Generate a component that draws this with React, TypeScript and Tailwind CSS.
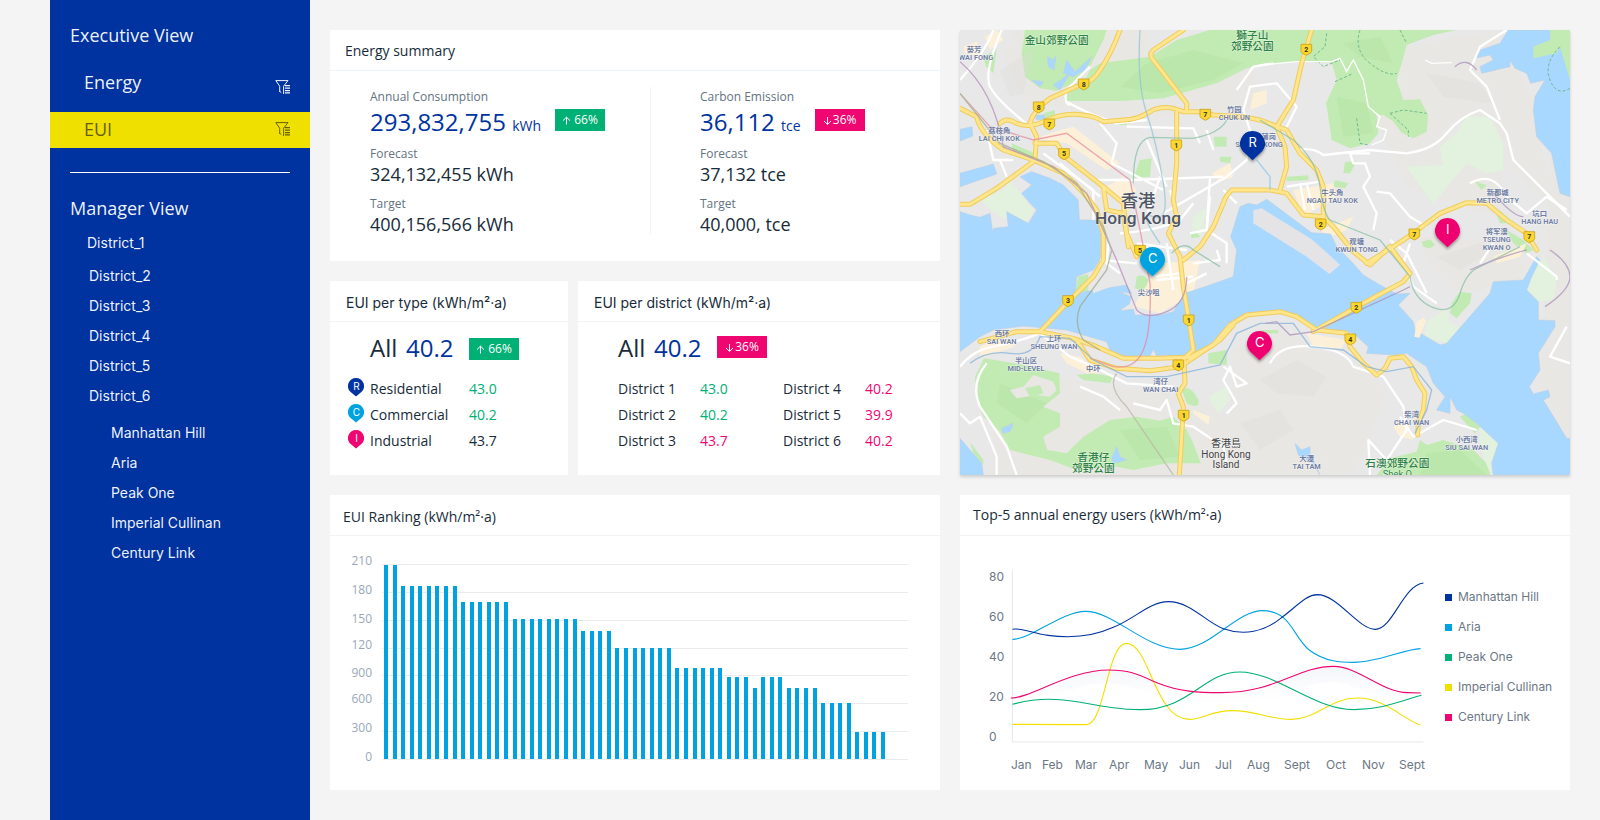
import type { ReactNode } from 'react';

const SANS = "font-['Open_Sans','Noto_Sans',sans-serif]";
const ALT = "font-['Inter','Noto_Sans_CJK_TC',sans-serif]";

const NAVY = '#0033a0';
const CYAN = '#00a3e0';
const GREEN = '#00b074';
const PINK = '#ef0670';
const YELLOW = '#f2df00';

function FilterIcon({ className = '' }: { className?: string }) {
  return (
    <svg className={className} width="15" height="14" viewBox="0 0 15 14" fill="none" stroke="currentColor" aria-hidden="true">
      <path d="M4.7 12V6.2L.8.6H13L8.6 6.2V14M4.7 11.4l1.6 1.2" />
      <path d="M10 5.6h5M10 8.1h5M10 10.6h5M10 12.8h5" strokeWidth="1.2" />
    </svg>
  );
}

function Badge({ down = false, className = '', children }: { down?: boolean; className?: string; children: ReactNode }) {
  return (
    <span
      className={`flex h-[22px] w-[50px] items-center justify-center text-xs text-white ${
        down ? 'gap-px bg-[#ef0670]' : 'gap-[3px] bg-[#00b074]'
      } ${className}`}
    >
      <svg width="9" height="9" viewBox="0 0 9 9" fill="none" stroke="currentColor" aria-hidden="true">
        {down ? <path d="M4.5 1v7.4M1 5l3.5 3.4L8 5" /> : <path d="M4.5 8.5V1.2M1 4.600L4.500 1.200l3.500 3.400" />}
      </svg>
      {children}
    </span>
  );
}

function Card({ title, titleClass, lineClass = 'border-[#f1f4f6]', children }: { title: string; titleClass: string; lineClass?: string; children: ReactNode }) {
  return (
    <section className="bg-white">
      <h2 className={`flex h-[41px] items-center border-b text-sm ${lineClass} ${titleClass}`}>{title}</h2>
      {children}
    </section>
  );
}

function Sidebar() {
  const row = 'flex h-9 items-center justify-between pr-5 pl-[34px] text-lg';
  return (
    <nav className="w-[260px] shrink-0 bg-[#0033a0] pt-5 text-white/95">
      <h2 className="flex h-[30px] items-center px-5 text-lg">Executive View</h2>
      <a href="#energy" className={`mt-3.5 ${row}`}>
        Energy
        <FilterIcon className="mb-1.5 self-end" />
      </a>
      <a href="#eui" className={`mt-3 bg-[#f0e000] pb-0.5 text-[#655f0a] ${row}`}>
        EUI
        <FilterIcon />
      </a>
      <hr className="mx-5 mt-6 border-white" />
      <h2 className="mt-5 flex h-[30px] items-center px-5 text-lg">Manager View</h2>
      <div className={`text-sm ${ALT}`}>
        <a href="#d1" className="mt-[5px] mb-[3px] flex h-[30px] items-center pl-[37px]">District_1</a>
        <ul>
          {[2, 3, 4, 5, 6].map((n) => (
            <li key={n}>
              <a href={`#d${n}`} className="flex h-[30px] items-center pl-[39px]">District_{n}</a>
            </li>
          ))}
        </ul>
        <ul className="mt-[7px]">
          {['Manhattan Hill', 'Aria', 'Peak One', 'Imperial Cullinan', 'Century Link'].map((n) => (
            <li key={n}>
              <a href="#site" className="flex h-[30px] items-center pl-[61px]">{n}</a>
            </li>
          ))}
        </ul>
      </div>
    </nav>
  );
}

type MetricProps = { label: string; value: string; unit: string; forecast: string; target: string; down?: boolean; change: string };

function Metric({ label, value, unit, forecast, target, down, change }: MetricProps) {
  const cap = 'text-xs leading-5 text-[#637381]';
  const val = 'text-lg leading-5';
  return (
    <dl>
      <dt className={cap}>{label}</dt>
      <dd className="flex h-8">
        <span className="text-2xl leading-[30px] text-[#0033a0]">
          {value} <span className="text-sm">{unit}</span>
        </span>
        <Badge down={down} className="mt-0.5 ml-3.5">{change}</Badge>
      </dd>
      <dt className={`mt-[5px] ${cap}`}>Forecast</dt>
      <dd className={val}>{forecast}</dd>
      <dt className={`mt-2.5 ${cap}`}>Target</dt>
      <dd className={val}>{target}</dd>
    </dl>
  );
}

function SmallPin({ color, letter }: { color: string; letter: string }) {
  return (
    <svg width="16" height="19" viewBox="0 0 16 19" className="block" aria-hidden="true">
      <path d="M8 0a8 8 0 0 1 5.900 13.400L8 18.600 2.100 13.400A8 8 0 0 1 8 0z" fill={color} />
      <text x="8.500" y="11.500" textAnchor="middle" fontSize="10" fill="#fff" fontFamily="Inter">{letter}</text>
    </svg>
  );
}

const BARS = (
  [[29, 2], [50, 7], [66, 6], [83, 8], [95, 4], [112, 7], [132, 6], [141, 3], [152, 1], [141, 3], [152, 4], [167, 4], [196, 4]] as [number, number][]
).flatMap(([top, count]) => Array.from({ length: count }, () => top));

const BAR_TICKS: [string, number][] = [['210', 29], ['180', 58], ['150', 87], ['120', 113], ['900', 141], ['600', 167], ['300', 196], ['0', 225]];

function BarChart() {
  return (
    <svg viewBox="0 0 610 254" className="block w-full" role="img" aria-label="EUI Ranking">
      {BAR_TICKS.map(([t], i) => (
        <path key={t} d={`M52 ${28.5 + Math.round(i * 27.86)}H578`} stroke="#e9ebef" />
      ))}
      {BARS.map((top, i) => (
        <rect key={i} x={Math.round(54 + i * 8.57)} y={top} width="4" height={223 - top} fill={CYAN} />
      ))}
      {BAR_TICKS.map(([t, y]) => (
        <text key={t} x="42" y={y} textAnchor="end" fontSize="12" fill="#99a8b8">{t}</text>
      ))}
    </svg>
  );
}

const LINES: [string, string][] = [
  [YELLOW, 'M153 703L335 704C380 700 385 460 432 460C490 460 500 688 586 688C620 688 640 662 692 662C750 662 780 688 836 688C900 688 930 624 997 624C1070 624 1110 690 1153 705'],
  [GREEN, 'M153 643C220 620 270 627 320 637C380 650 420 659 465 659C590 659 620 546 710 546C800 546 890 659 990 659C1060 659 1110 630 1155 616'],
  [PINK, 'M149 624C200 624 290 540 390 540C440 540 460 553 510 580C560 605 610 608 665 608C800 608 850 529 940 529C1000 529 1060 608 1120 608L1153 609'],
  [CYAN, 'M153 448C200 448 270 365 333 364C400 364 480 478 562 478C640 478 700 362 766 362C835 362 840 440 880 480C920 517 960 517 990 517C1050 517 1110 478 1153 476'],
  [NAVY, 'M153 418C175 412 200 430 240 436C300 446 350 440 400 412C450 388 490 335 535 335C590 335 630 400 670 416C720 438 770 425 810 385C850 350 870 315 900 314C950 314 1000 418 1042 418C1085 418 1110 285 1160 279'],
];

const MONTHS: [string, number][] = [
  ['Jan', 51], ['Feb', 82], ['Mar', 115], ['Apr', 149], ['May', 184], ['Jun', 219], ['Jul', 255], ['Aug', 287], ['Sept', 324], ['Oct', 366], ['Nov', 402], ['Sept', 439],
];

function LineChart() {
  return (
    <svg viewBox="0 0 475 254" className={`block min-w-0 flex-1 ${ALT}`} role="img" aria-label="Top-5 annual energy users">
      <defs>
        <linearGradient id="haze" x1="0" y1="0" x2="0" y2="1">
          <stop offset="0" stopColor="#eef0f6" stopOpacity=".7" />
          <stop offset="1" stopColor="#fff" stopOpacity="0" />
        </linearGradient>
      </defs>
      <g transform="translate(-10 -46) scale(.40816 .33333)" fill="none">
        <path d="M149 624C200 624 290 540 390 540C440 540 460 553 510 580C560 605 610 608 665 608C800 608 850 529 940 529C1000 529 1060 608 1120 608V650C1060 650 1000 580 940 575C850 575 800 650 665 650C560 650 480 590 390 580C290 580 200 660 149 665z" fill="url(#haze)" />
        <path d="M153 240V756H1160" stroke="#e6e8ec" vectorEffect="non-scaling-stroke" />
        {LINES.map(([c, d]) => (
          <path key={c} d={d} stroke={c} strokeWidth="1.1" vectorEffect="non-scaling-stroke" />
        ))}
      </g>
      <g fontSize="12" fill="#6b7785">
        {['80', '60', '40', '20', '0'].map((t, i) => (
          <text key={t} x="29" y={45 + i * 40}>{t}</text>
        ))}
        {MONTHS.map(([m, x]) => (
          <text key={x} x={x} y="233">{m}</text>
        ))}
      </g>
    </svg>
  );
}

/* ---- Map: drawn in an 1830 x 1335 space, three units per pixel ---- */

const TERRAIN = [
  'M170 0L560 0 600 120 300 230 200 220 130 80z',
  'M300 215L600 215 880 110 900 200 850 240 700 250 560 270 350 250z',
  'M1325 50L1620 0 1680 130 1740 250 1750 400 1830 560 1600 380 1500 260 1400 340 1320 300z',
  'M1240 250L1500 330 1640 270 1620 560 1350 480z',
  'M1380 620L1720 640 1680 750 1500 790 1400 700z',
  'M820 960L960 900 1200 1010 1280 1080 1240 1200 1180 1330 800 1330z',
  'M100 1010L400 1060 700 1100 880 1200 860 1335 100 1335z',
  'M1790 0L1830 0 1830 1240 1740 1080z',
];

const PARKS = [
  'M195 0L185 70 195 140 240 175 290 182 340 160 390 110 430 30 440 0z',
  'M370 160L390 120 420 100 570 80 650 30 750 0 1490 0 1420 15 1340 45 1325 100 1310 150 1330 210 1380 208 1404 255 1400 305 1360 325 1325 308 1300 275 1270 255 1250 255 1255 310 1230 340 1170 355 1115 330 1105 260 1098 220 1130 150 1115 98 1010 95 900 105 860 115 770 160 610 205 490 213 312 213 315 195z',
  'M70 80L110 60 100 130 78 110z',
  'M250 250L285 240 285 275 255 275z',
  'M155 340L225 370 225 385 160 370z',
  'M480 272L505 272 500 285 475 285z',
  'M760 320L800 320 800 350 765 350zM780 380L815 380 810 400 780 395z',
  'M540 390L575 385 570 440 520 445z',
  'M690 610L715 600 720 620 695 625z',
  'M355 740L385 732 385 790 345 780z',
  'M530 740Q550 730 565 750L555 785 525 775z',
  'M72 985L180 1002 298 1030 300 1090 250 1130 300 1150 300 1190 250 1220 262 1260 320 1270 370 1220 450 1170 530 1160 600 1172 640 1160 680 1200 700 1240 722 1300 620 1300 520 1320 470 1310 350 1320 270 1290 150 1260 120 1205 70 1160 50 1110 45 1040z',
  'M350 1035L400 1030 460 1040 450 1060 370 1050z',
  'M745 970L800 960 800 1005 745 1000z',
  'M665 1080Q690 1060 715 1110 720 1140 680 1120z',
  'M1155 395L1190 395 1170 430 1150 430z',
  'M1125 450L1165 460 1155 475 1120 470z',
  'M980 440L1045 436 1045 450 980 454z',
  'M1385 635L1410 628 1425 645 1410 655 1390 650z',
  'M1475 820L1500 785 1535 790 1530 820 1490 865 1470 850z',
  'M1600 530L1630 550 1640 580 1620 580zM1640 600L1690 630 1720 660 1700 670 1660 640z',
  'M1540 450L1560 460 1580 465 1565 480z',
  'M1250 1335L1290 1285 1370 1265 1380 1230 1400 1245 1450 1230 1540 1260 1590 1310 1590 1335z',
  'M1500 1160L1520 1150 1560 1190 1545 1210z',
  'M30 1235L70 1290 70 1305 40 1270z',
  'M905 900h50v10h-50z',
];

const PALE = [
  'M1520 260L1590 260 1630 340 1630 420 1580 430 1520 400 1470 460 1420 525 1340 410 1450 405 1440 350 1490 310z',
  'M60 510L130 480 150 450 220 540 200 580 120 560z',
  'M1400 875L1460 835 1470 880 1500 890 1460 940 1395 920z',
  'M1705 740L1750 680 1790 750 1780 810 1720 815 1700 780z',
  'M730 540L740 535 725 620 695 600 700 560z',
  'M1560 1190L1615 1240 1590 1330 1560 1250z',
  'M745 1100L800 1070 810 1110 775 1150z',
];

const SAND = [
  'M300 300L340 290 480 400 440 420 320 340 230 325z',
  'M440 470L490 440 530 480 500 550z',
  'M75 20L110 0 130 30 90 60zM10 50L50 35 70 80 15 70z',
  'M520 830L600 700 720 690 700 790 600 850 530 830z',
  'M1000 480L1120 460 1130 500 1030 560z',
  'M1080 600L1180 560 1160 600 1110 620z',
  'M1040 910L1160 930 1140 960 1060 950z',
  'M1600 680L1700 640 1680 680 1610 700z',
  'M300 970L360 980 420 1030 380 1030 320 1000z',
  'M880 190L920 180 920 220 870 240z',
  'M755 430L810 400 820 440 780 455z',
  'M60 950L100 930 180 930 160 950 60 985z',
  'M1300 1190L1340 1170 1360 1230 1320 1220z',
  'M700 1140L750 1160 745 1185 700 1150z',
];

const WATER = [
  'M0 298L36 290 38 318 0 333z',
  'M0 430L100 402 110 432 0 470z',
  'M0 545L30 555 60 562 90 550 98 605 102 595 145 590 140 545 205 580 230 540 210 520 185 490 215 465 180 440 215 425 270 445 310 465 355 510 358 570 410 570 425 620 420 690 400 720 350 740 345 790 500 765 515 790 478 785 513 800 508 822 478 842 520 838 525 855 600 855 640 845 675 790 735 770 820 740 830 660 812 620 840 530 865 520 890 525 920 508 1055 608 1112 612 1130 650 1170 690 1210 735 1260 765 1310 792 1350 790 1315 825 1360 875 1365 900 1440 945 1460 940 1590 790 1600 755 1690 750 1730 680 1740 690 1715 740 1700 780 1735 815 1735 870 1785 872 1785 890 1735 970 1740 1020 1708 1070 1720 1092 1765 1080 1770 1100 1750 1110 1820 1225 1830 1225 1830 1335 1600 1335 1595 1300 1615 1240 1550 1180 1510 1150 1490 1140 1470 1100 1470 1150 1430 1140 1455 1100 1420 1060 1400 1010 1340 970 1300 975 1220 970 1225 950 1180 910 1150 900 1080 900 1030 870 960 840 930 845 820 870 770 935 690 975 590 978 580 958 570 978 490 978 450 960 440 935 370 915 320 900 190 888 100 900 60 920 0 965z',
  'M1645 0L1620 40 1560 60 1545 85 1590 75 1600 90 1560 110 1565 130 1650 110 1650 90 1665 115 1700 130 1712 160 1755 150 1725 200 1720 240 1730 320 1775 370 1800 490 1830 500 1830 0z',
  'M0 1225L30 1260 65 1300 70 1335 0 1335z',
  'M262 80L280 90 288 75 282 120 265 110zM320 90L345 125 395 80 375 120 340 140 310 130zM280 165L330 130 300 180zM215 150L250 155 240 170z',
  'M228 255h25v14h-25z',
  'M125 1195L160 1180 150 1205 130 1210zM455 1285L470 1250 480 1280 500 1290 460 1300z',
  'M1005 1240L1025 1260 1050 1250 1050 1275 1065 1300 1080 1335 1060 1300 1015 1275z',
];

const LAND: [string, string][] = [
  ['M880 540L905 535 1055 628 1125 690 1140 705 1108 732 1040 680 880 580z', '#e4e4e6'],
  ['M1770 0L1770 30 1720 50 1720 85 1790 70 1800 50 1830 150 1830 0z', '#c2ebb3'],
  ['M1370 875l20-12 8 10-20 50-15-3z', '#fdf0d8'],
  ['M150 1080L190 1070 220 1035 280 1055 290 1080 270 1100 230 1095 170 1105z', '#e9e7e3'],
  ['M195 1075L240 1065 250 1090 210 1100z', '#c2ebb3'],
  ['M385 740L480 720 530 740 400 790z', '#e8e8e8'],
];

const WHITE = [
  'M100 0Q80 60 0 150M125 0Q70 130 90 170T210 290M80 300L100 390 160 390M120 390L140 440',
  'M250 370L400 480 400 570M300 400L420 500M500 290L700 295 720 340M560 330L620 470M420 280L470 340 455 400 610 480',
  'M400 450H520L790 440M610 550L800 440 860 390 870 300 850 240 870 170 950 160 1010 230 980 290',
  'M330 225Q310 220 320 180L390 110M320 215Q380 250 470 280L560 270',
  'M480 610Q600 600 660 570L700 520M630 480L650 550M530 640L680 660M690 610L740 600 750 500',
  'M750 440L740 600 800 640 800 700M760 360L740 300M600 440L560 560M830 180L880 110 940 100',
  'M1010 360Q1060 350 1090 375L1230 360 1340 370Q1420 360 1460 310T1560 240L1620 280 1640 310 1660 390 1740 470 1830 560',
  'M1230 370L1170 370 1180 400 1215 400 1230 440 1210 470 1250 550 1240 600M1250 485L1290 490 1350 560 1400 590',
  'M1640 0L1560 50 1530 120 1580 170 1620 270M1530 460Q1600 420 1640 500L1700 550 1760 500 1820 540',
  'M1700 670L1790 740 1790 750M1560 700L1600 640M1820 890L1770 980 1830 1000M1350 640L1330 700 1360 770 1430 820',
  'M0 1010Q40 960 100 950T240 910L330 980 400 1010 500 1060 640 1070M80 1000Q30 1060 60 1130L140 1250 170 1335',
  'M0 1150L30 1180 60 1160 110 1280 110 1335M360 1070L430 1100 480 1140M520 1120L600 1140 620 1110 640 1180 700 1190 790 1250 800 1300',
  'M790 1010L860 1060 830 1070 810 1010 790 1050 830 1120 800 1150',
  'M930 1000Q960 940 1060 950T1180 1010L1270 1040 1330 1130 1340 1200 1280 1290 1225 1230 1230 1335M1320 1160L1360 1220 1450 1170 1550 1200',
  'M1290 630L1340 670 1400 790M420 690L530 700M620 640L640 780M560 640L580 740 660 730M1040 460L1060 540M1020 460L1035 540M980 470L1080 455',
  'M700 700L780 690 770 660M680 760L740 730M590 750L700 740M445 640L440 700 480 730M790 480L830 520',
];

const YELLOW_ROADS = [
  'M480 0Q455 70 420 120 400 155 360 165L270 205Q220 240 210 280',
  'M670 0L580 60Q565 75 580 90L680 220V245',
  'M120 280Q140 260 170 280 210 295 250 275 310 245 370 255 410 260 430 275L490 270Q530 270 570 245 610 220 670 245L720 245 760 255 850 260 900 270 980 300 1020 370 1070 420 1090 470V570',
  'M650 245V400L640 510 650 560 625 610 660 680 670 770 685 860 700 960 672 985 675 1060 655 1090 670 1130 665 1220 658 1335',
  'M0 235L50 260Q60 310 130 360L220 390 310 430Q370 480 410 540L430 610V690L400 740 320 820 240 905',
  'M0 523H30L110 475 220 395M210 280L230 320 225 385M225 340H290L315 380 430 470 440 540 490 550 505 650M430 470L490 520 500 610 530 680',
  'M930 480H815Q795 500 790 520L760 590 720 650 670 690M930 480L980 490 1030 555 1090 560 1120 590 1180 665 1230 705 1290 650 1350 730 1330 755 1200 825 1060 905',
  'M1055 0L1025 100 1000 210 950 290 975 350 980 410 960 480',
  'M1220 700L1300 650 1360 610 1440 550 1520 518 1580 520 1640 570 1700 610 1730 660',
  'M60 935L170 905 240 905 340 925 410 950 490 985H590L690 982 760 945 810 885 860 855 960 845 1010 860 1070 900 1160 910 1170 950 1210 1000 1250 1035 1275 1015 1290 985 1330 980 1355 1010 1370 1050 1395 1090 1390 1140 1375 1180 1373 1215',
  'M350 930L390 990 470 1015 570 1022 660 1010 720 970 780 930 820 885',
];

type Kind = 'place' | 'park' | 'parkSmall' | 'city' | 'dark';

const LABELS: { x: number; y: number; t: string; k?: Kind }[] = [
  { x: 290, y: 43, t: '金山郊野公園', k: 'park' }, { x: 877, y: 27, t: '獅子山', k: 'park' }, { x: 877, y: 59, t: '郊野公園', k: 'park' },
  { x: 400, y: 1293, t: '香港仔', k: 'park' }, { x: 400, y: 1325, t: '郊野公園', k: 'park' }, { x: 1312, y: 1311, t: '石澳郊野公園', k: 'park' },
  { x: 1312, y: 1341, t: 'Shek O', k: 'parkSmall' },
  { x: 42, y: 65, t: '葵芳' }, { x: 48, y: 89, t: 'WAI FONG' }, { x: 118, y: 309, t: '荔枝角' }, { x: 118, y: 333, t: 'LAI CHI KOK' },
  { x: 823, y: 247, t: '竹园' }, { x: 823, y: 271, t: 'CHUK UN' }, { x: 915, y: 327, t: '新蒲岗' }, { x: 897, y: 351, t: 'SAN PO KONG' },
  { x: 1117, y: 496, t: '牛头角' }, { x: 1117, y: 520, t: 'NGAU TAU KOK' }, { x: 1190, y: 642, t: '观塘' }, { x: 1190, y: 666, t: 'KWUN TONG' },
  { x: 1613, y: 495, t: '新都城' }, { x: 1613, y: 519, t: 'METRO CITY' }, { x: 1739, y: 558, t: '坑口' }, { x: 1739, y: 582, t: 'HANG HAU' },
  { x: 1610, y: 611, t: '将军澳' }, { x: 1610, y: 635, t: 'TSEUNG' }, { x: 1610, y: 659, t: 'KWAN O' },
  { x: 566, y: 795, t: '尖沙咀' }, { x: 126, y: 918, t: '西环' }, { x: 125, y: 942, t: 'SAI WAN' }, { x: 282, y: 934, t: '上环' }, { x: 282, y: 958, t: 'SHEUNG WAN' },
  { x: 198, y: 998, t: '半山区' }, { x: 198, y: 1022, t: 'MID-LEVEL' }, { x: 400, y: 1023, t: '中环' }, { x: 602, y: 1061, t: '湾仔' }, { x: 602, y: 1085, t: 'WAN CHAI' },
  { x: 1355, y: 1160, t: '柴湾' }, { x: 1355, y: 1184, t: 'CHAI WAN' }, { x: 1520, y: 1237, t: '小西湾' }, { x: 1520, y: 1261, t: 'SIU SAI WAN' },
  { x: 1040, y: 1294, t: '大潭' }, { x: 1040, y: 1318, t: 'TAI TAM' },
  { x: 534, y: 530, t: '香港', k: 'city' }, { x: 534, y: 582, t: 'Hong Kong', k: 'city' },
  { x: 798, y: 1252, t: '香港島', k: 'dark' }, { x: 798, y: 1284, t: 'Hong Kong', k: 'dark' }, { x: 798, y: 1315, t: 'Island', k: 'dark' },
];

const LABEL_CLASS: Record<Kind, string> = {
  place: 'fill-[#6f7da3] text-[22px] font-semibold',
  park: 'fill-[#2c8043] text-[32px] font-medium',
  parkSmall: 'fill-[#2c8043] text-[28px]',
  city: 'fill-[#4e5666] text-[52px] font-medium',
  dark: 'fill-[#3c4043] text-[30px]',
};

const SHIELDS: [number, number, string][] = [
  [371, 162, '8'], [236, 231, '8'], [268, 282, '7'], [736, 253, '7'], [649, 345, '1'], [312, 371, '5'], [540, 661, '5'],
  [1039, 58, '2'], [1082, 582, '2'], [1363, 612, '7'], [1708, 620, '7'], [324, 812, '3'], [686, 870, '1'], [655, 1005, '4'],
  [671, 1156, '1'], [1189, 832, '2'], [1171, 927, '4'],
];

const PINS: [number, number, string, string][] = [
  [840, 303, NAVY, 'R'], [540, 651, CYAN, 'C'], [861, 903, PINK, 'C'], [1425, 564, PINK, 'I'],
];

function DistrictMap() {
  return (
    <svg
      viewBox="0 0 1830 1335"
      preserveAspectRatio="xMidYMid slice"
      className="block w-full font-['Roboto','Noto_Sans_CJK_TC',sans-serif] shadow-[0_2px_3px_rgba(0,0,0,0.16)]"
      role="img"
      aria-label="Map of Hong Kong"
    >
      <defs>
        <filter id="pinShadow" x="-30%" y="-30%" width="160%" height="170%">
          <feDropShadow dx="0" dy="6" stdDeviation="5" floodOpacity=".4" />
        </filter>
      </defs>
      <rect width="1830" height="1335" fill="#e8e8e8" />
      {TERRAIN.map((d) => <path key={d} d={d} fill="#e9e7e3" />)}
      {PARKS.map((d) => <path key={d} d={d} fill="#c2ebb3" />)}
      <path d="M560 100L700 60 850 100 760 150 600 190 480 170zM1150 40L1260 20 1300 100 1200 80zM1130 200L1220 220 1240 310 1150 320zM120 1060L260 1120 200 1180 110 1120zM480 1200L620 1190 660 1280 540 1290zM1400 1270L1500 1260 1580 1335 1380 1335z" fill="#b5e4a6" opacity=".6" />
      <path d="M900 1050L1010 990 1100 1040 1060 1100 950 1090zM840 1180L960 1140 1000 1200 900 1260zM1400 130L1560 160 1600 220 1450 200zM1430 680L1560 640 1600 660 1500 720zM220 60L120 120 150 200 190 190z" fill="#dedcd7" opacity=".35" />
      {PALE.map((d) => <path key={d} d={d} fill="#e2f2df" />)}
      {SAND.map((d) => <path key={d} d={d} fill="#fdf0d8" />)}
      {WATER.map((d) => <path key={d} d={d} fill="#a8d7ff" stroke="#bcd0e6" strokeWidth="2" />)}
      {LAND.map(([d, c]) => <path key={d} d={d} fill={c} />)}
      <path d="M1800 50Q1750 100 1770 150T1830 175M1100 10L1095 50 1060 80 1090 110 1140 90M1200 0Q1180 60 1230 100T1310 130M1125 155L1180 130M1190 265L1200 340 1225 345M1290 250L1330 240 1400 250M1320 0L1340 40M1290 250L1345 300V320" fill="none" stroke="#6fb98c" strokeWidth="3" strokeDasharray="9 6" />
      <g fill="none" stroke="#fff" strokeWidth="7" strokeLinejoin="round">
        {WHITE.map((d) => <path key={d} d={d} />)}
      </g>
      <path d="M900 105L1010 95 1115 95 1140 85 1160 125 1180 90 1210 150 1225 230 1260 260 1250 290 1280 300 1270 330 1235 345M1395 90L1415 100 1475 98" fill="none" stroke="#fff" strokeWidth="4" />
      <g fill="none" strokeLinejoin="round" strokeLinecap="round">
        {YELLOW_ROADS.map((d) => <path key={d} d={d} stroke="#f1cb5c" strokeWidth="15" />)}
        {YELLOW_ROADS.map((d) => <path key={d} d={d} stroke="#ffe68c" strokeWidth="9" />)}
      </g>
      <g fill="none" strokeWidth="4" opacity=".7">
        <path d="M0 190L90 290 220 330 320 310 510 450 550 650 570 760Q575 900 550 960T460 1010L390 985" stroke="#e4879a" />
        <path d="M0 95Q100 180 130 350L280 410 380 490 470 690 530 840Q560 870 620 845T680 740" stroke="#b287b8" />
        <path d="M0 190L120 340 250 395 350 460 430 590 455 660 440 720 360 830Q340 880 370 930L420 960" stroke="#9ba68a" />
        <path d="M470 1030Q440 1070 500 1130L640 1335" stroke="#b7b4a2" />
        <path d="M540 0Q530 160 560 250T610 460 580 560 600 640" stroke="#8fc2d4" />
        <path d="M520 460Q520 330 570 322L700 325Q780 310 800 270M900 270L1000 330Q1070 390 1080 470T1110 570L1260 630 1350 740Q1360 810 1420 833T1500 790 1560 710L1680 650" stroke="#83bda2" />
        <path d="M635 670Q670 630 700 660L780 710" stroke="#83bda2" />
        <path d="M890 390L930 440 930 480" stroke="#86c3ea" />
        <path d="M30 1000Q80 960 150 970T240 920L330 925 400 990 500 1040 620 1040 780 1005 830 910 900 880 1000 880 1050 950 1150 960 1220 1010 1280 1025 1360 1010 1415 1080 1400 1140 1365 1210" stroke="#7fafd8" />
        <path d="M915 880L950 875 990 915 1060 905 1330 780 1350 770M1530 720Q1620 680 1700 660M1600 490Q1660 560 1690 560M1485 110Q1520 80 1550 120M1770 660Q1830 700 1830 740T1755 830" stroke="#a58bb8" />
      </g>
      {SHIELDS.map(([x, y, n]) => (
        <g key={`${x}-${y}`}>
          <path d={`M${x - 16} ${y - 15}h32v21q0 5-16 12q-16-7-16-12z`} fill="#fbd62e" stroke="#c9a21c" strokeWidth="2.5" />
          <text x={x} y={y + 8} textAnchor="middle" className="fill-[#333] text-[21px] font-bold">{n}</text>
        </g>
      ))}
      {LABELS.map(({ x, y, t, k }) => (
        <text key={`${t}-${x}-${y}`} x={x} y={y} textAnchor="middle" className={LABEL_CLASS[k ?? 'place']} stroke="#fff" strokeOpacity=".6" strokeWidth="3" paintOrder="stroke">
          {t}
        </text>
      ))}
      {PINS.map(([x, y, c, t]) => (
        <g key={`${x}`} transform={`translate(${x} ${y})`}>
          <path d="M37.5 0a37.5 37.5 0 0 1 29 61L37.5 88 8.500 61A37.5 37.5 0 0 1 37.5 0z" fill={c} filter="url(#pinShadow)" />
          <text x="38" y="47" textAnchor="middle" className="fill-white font-['Inter',sans-serif] text-[39px]">{t}</text>
        </g>
      ))}
    </svg>
  );
}

const TYPES: [string, string, string, string, string][] = [
  ['R', NAVY, 'Residential', '43.0', 'text-[#00b074]'],
  ['C', CYAN, 'Commercial', '40.2', 'text-[#00b074]'],
  ['I', PINK, 'Industrial', '43.7', ''],
];

const DISTRICTS: [string, string, string, string, string][] = [
  ['District 1', '43.0', 'text-[#00b074]', 'District 4', '40.2'],
  ['District 2', '40.2', 'text-[#00b074]', 'District 5', '39.9'],
  ['District 3', '43.7', 'text-[#ef0670]', 'District 6', '40.2'],
];

const LEGEND: [string, string][] = [
  ['Manhattan Hill', 'bg-[#0033a0]'], ['Aria', 'bg-[#00a3e0]'], ['Peak One', 'bg-[#00b074]'], ['Imperial Cullinan', 'bg-[#f2df00]'], ['Century Link', 'bg-[#ef0670]'],
];

export default function App() {
  return (
    <div className={`flex min-h-screen bg-[#f4f4f4] pl-[50px] text-[#172b3a] ${SANS}`}>
      <Sidebar />
      <main className="grid min-w-0 flex-1 grid-cols-2 content-start gap-5 py-[30px] pr-[30px] pl-5">
        <div className="flex flex-col gap-5">
          <Card title="Energy summary" titleClass="pl-[15px] pt-0.5" lineClass="border-[#edf5fb]">
            <div className="grid grid-cols-[320fr_290fr] pt-4 pb-[27px]">
              <div className="pl-10">
                <Metric label="Annual Consumption" value="293,832,755" unit="kWh" forecast="324,132,455 kWh" target="400,156,566 kWh" change="66%" />
              </div>
              <div className="border-l border-[#f1f4f6] pl-[49px]">
                <Metric label="Carbon Emission" value="36,112" unit="tce" forecast="37,132 tce" target="40,000, tce" down change="36%" />
              </div>
            </div>
          </Card>
          <div className="grid grid-cols-[238fr_362fr] gap-2.5">
            <Card title="EUI per type (kWh/m²·a)" titleClass={`pl-4 pt-1 ${ALT}`}>
              <div className="mt-1.5 flex h-10 pl-10 text-2xl leading-10">
                <span className="w-9">All</span>
                <span className="w-[63px] text-[#0033a0]">40.2</span>
                <Badge className="mt-2.5">66%</Badge>
              </div>
              <table className="mt-2 mb-[21px] text-sm">
                <tbody>
                  {TYPES.map(([l, c, name, v, tone]) => (
                    <tr key={l} className="h-[26px]">
                      <td className="w-10 p-0 pt-0.5 pl-[18px] align-top"><SmallPin color={c} letter={l} /></td>
                      <td className="w-[99px] p-0 leading-5">{name}</td>
                      <td className={`p-0 leading-5 ${tone}`}>{v}</td>
                    </tr>
                  ))}
                </tbody>
              </table>
            </Card>
            <Card title="EUI per district (kWh/m²·a)" titleClass={`pl-4 pt-1 ${ALT}`}>
              <div className="mt-1.5 flex h-10 pl-10 text-2xl leading-10">
                <span className="w-9">All</span>
                <span className="w-[63px] text-[#0033a0]">40.2</span>
                <Badge down className="mt-2">36%</Badge>
              </div>
              <table className="mt-2 mb-[21px] ml-10 text-sm">
                <tbody>
                  {DISTRICTS.map(([a, av, tone, b, bv]) => (
                    <tr key={a} className="h-[26px]">
                      <td className="w-[82px] p-0 leading-5">{a}</td>
                      <td className={`w-[83px] p-0 leading-5 ${tone}`}>{av}</td>
                      <td className="w-[82px] p-0 leading-5">{b}</td>
                      <td className="p-0 leading-5 text-[#ef0670]">{bv}</td>
                    </tr>
                  ))}
                </tbody>
              </table>
            </Card>
          </div>
        </div>
        <DistrictMap />
        <Card title="EUI Ranking (kWh/m²·a)" titleClass="pl-[13px] pt-[3px]">
          <BarChart />
        </Card>
        <Card title="Top-5 annual energy users (kWh/m²·a)" titleClass="pl-[13px]">
          <div className="flex">
            <LineChart />
            <ul className={`w-[135px] shrink-0 pt-[46px] pl-2.5 text-xs text-[#6b7785] ${ALT}`}>
              {LEGEND.map(([n, c]) => (
                <li key={n} className="flex h-[30px] items-center gap-1.5 whitespace-nowrap">
                  <span className={`size-[7px] ${c}`} />
                  {n}
                </li>
              ))}
            </ul>
          </div>
        </Card>
      </main>
    </div>
  );
}
